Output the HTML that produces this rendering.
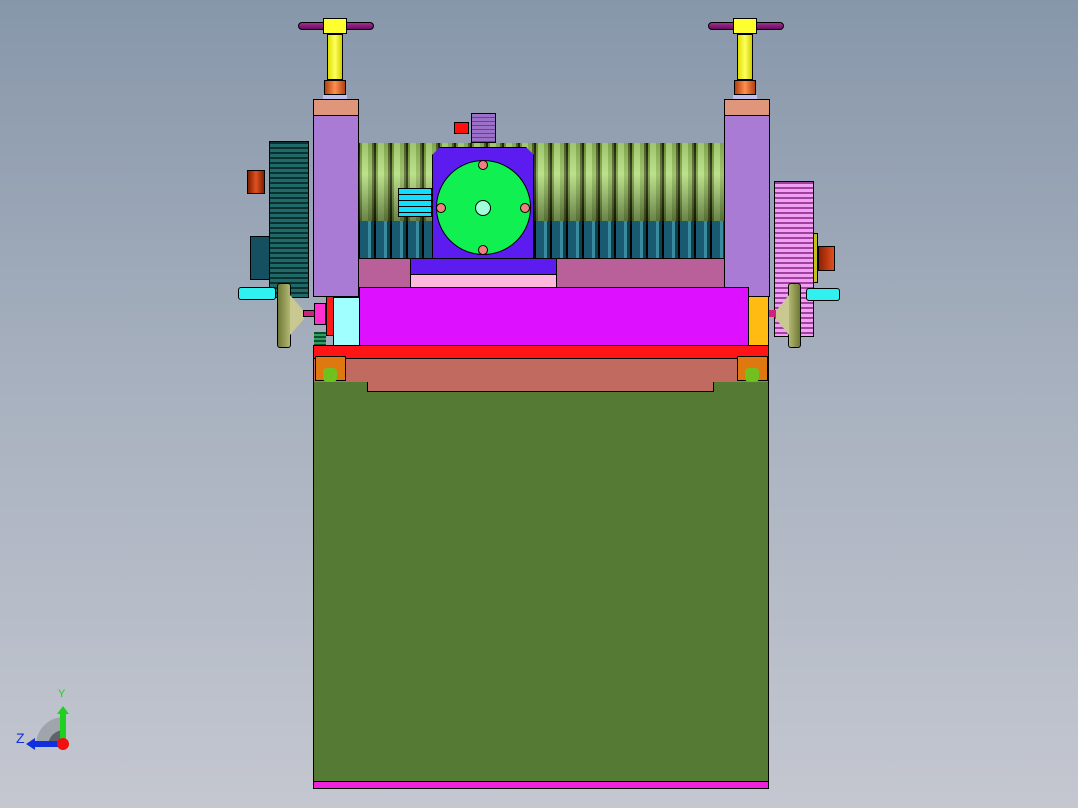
<!DOCTYPE html>
<html><head><meta charset="utf-8"><style>
*{margin:0;padding:0;box-sizing:border-box}
body{width:1078px;height:808px;overflow:hidden;position:relative;background:linear-gradient(#8797aa,#a9b2c0 50%,#c4c7d0);font-family:"Liberation Sans",sans-serif}
.a{position:absolute}
.b{border:1px solid #000}
</style></head><body>
<!-- top handles -->
<div class="a b" style="left:298px;top:22px;width:76px;height:8px;background:linear-gradient(#a03090,#6a0a60);border-radius:4px"></div>
<div class="a b" style="left:323px;top:18px;width:24px;height:16px;background:#ffff30"></div>
<div class="a b" style="left:327px;top:34px;width:16px;height:46px;background:linear-gradient(90deg,#e0e000,#ffff60,#d0d000)"></div>
<div class="a b" style="left:324px;top:80px;width:22px;height:15px;background:linear-gradient(90deg,#b04010,#ff9050,#b04010)"></div>
<div class="a" style="left:323px;top:95px;width:24px;height:4px;background:#c0c0f0"></div>
<div class="a b" style="left:708px;top:22px;width:76px;height:8px;background:linear-gradient(#a03090,#6a0a60);border-radius:4px"></div>
<div class="a b" style="left:733px;top:18px;width:24px;height:16px;background:#ffff30"></div>
<div class="a b" style="left:737px;top:34px;width:16px;height:46px;background:linear-gradient(90deg,#e0e000,#ffff60,#d0d000)"></div>
<div class="a b" style="left:734px;top:80px;width:22px;height:15px;background:linear-gradient(90deg,#b04010,#ff9050,#b04010)"></div>
<div class="a" style="left:733px;top:95px;width:24px;height:4px;background:#c0c0f0"></div>
<!-- rollers -->
<div class="a" style="left:358px;top:143px;width:366px;height:78px;background:repeating-linear-gradient(90deg,#202a08 0 2px,#7a9a40 2px 4px,#b0dc78 4px 10px,#90b858 10px 14px,#506a20 14px 16px);"></div>
<div class="a" style="left:358px;top:143px;width:366px;height:78px;background:linear-gradient(rgba(0,0,0,.1),rgba(255,255,255,.15) 40%,rgba(0,0,0,.4))"></div>
<div class="a" style="left:358px;top:221px;width:366px;height:37px;background:repeating-linear-gradient(90deg,#000 0 2px,#1a5a70 2px 10px,#3a8aa0 10px 13px,#104050 13px 16px)"></div>
<!-- left side parts -->
<div class="a b" style="left:247px;top:170px;width:18px;height:24px;background:linear-gradient(90deg,#802000,#e05020,#802000)"></div>
<div class="a b" style="left:250px;top:236px;width:20px;height:44px;background:#145060"></div>
<div class="a b" style="left:269px;top:141px;width:40px;height:157px;background:repeating-linear-gradient(#0a3030 0 2px,#1f6a68 2px 5px)"></div>
<div class="a b" style="left:238px;top:287px;width:38px;height:13px;background:#30f0f0;border-radius:3px"></div>
<div class="a b" style="left:277px;top:283px;width:14px;height:65px;background:linear-gradient(90deg,#707838,#b0b870);border-radius:3px"></div>
<div class="a" style="left:290px;top:295px;width:14px;height:40px;background:#c8c890;clip-path:polygon(0 0,100% 40%,100% 60%,0 100%)"></div>
<div class="a b" style="left:303px;top:310px;width:12px;height:7px;background:#d02080"></div>
<div class="a b" style="left:314px;top:303px;width:12px;height:22px;background:#ff30d0"></div>
<div class="a" style="left:314px;top:332px;width:12px;height:13px;background:repeating-linear-gradient(#0a5030 0 2px,#30a060 2px 4px)"></div>
<!-- right side parts -->
<div class="a b" style="left:774px;top:181px;width:40px;height:156px;background:repeating-linear-gradient(#a040a0 0 2px,#f0a0f0 2px 5px)"></div>
<div class="a b" style="left:813px;top:233px;width:5px;height:50px;background:#c0c020"></div>
<div class="a b" style="left:818px;top:246px;width:17px;height:25px;background:linear-gradient(90deg,#902000,#e05020)"></div>
<div class="a b" style="left:806px;top:288px;width:34px;height:13px;background:#30f0f0;border-radius:3px"></div>
<div class="a b" style="left:788px;top:283px;width:13px;height:65px;background:linear-gradient(90deg,#b0b870,#707838);border-radius:3px"></div>
<div class="a" style="left:776px;top:295px;width:13px;height:40px;background:#c8c890;clip-path:polygon(100% 0,0 40%,0 60%,100% 100%)"></div>
<div class="a" style="left:768px;top:310px;width:8px;height:7px;background:#d02080"></div>
<!-- pillars -->
<div class="a b" style="left:313px;top:99px;width:46px;height:17px;background:#e0967a"></div>
<div class="a b" style="left:313px;top:115px;width:46px;height:182px;background:#aa7bd4"></div>
<div class="a b" style="left:724px;top:99px;width:46px;height:17px;background:#e0967a"></div>
<div class="a b" style="left:724px;top:115px;width:46px;height:182px;background:#aa7bd4"></div>
<!-- center housing -->
<div class="a b" style="left:358px;top:258px;width:367px;height:30px;background:#b9609a"></div>
<div class="a b" style="left:410px;top:258px;width:147px;height:17px;background:#5c1cf0"></div>
<div class="a b" style="left:410px;top:274px;width:147px;height:14px;background:#ffb8dd"></div>
<div class="a b" style="left:432px;top:147px;width:102px;height:112px;background:#5c1cf0;clip-path:polygon(0 8px,8px 0,calc(100% - 8px) 0,100% 8px,100% 100%,0 100%)"></div>
<div class="a" style="left:436px;top:160px;width:95px;height:95px;border-radius:50%;background:#10f050;border:1px solid #000"></div>
<div class="a b" style="left:475px;top:200px;width:16px;height:16px;border-radius:50%;background:#a0ffd8"></div>
<div class="a b" style="left:478px;top:160px;width:10px;height:10px;border-radius:50%;background:#f08080"></div>
<div class="a b" style="left:478px;top:245px;width:10px;height:10px;border-radius:50%;background:#f08080"></div>
<div class="a b" style="left:436px;top:203px;width:10px;height:10px;border-radius:50%;background:#f08080"></div>
<div class="a b" style="left:520px;top:203px;width:10px;height:10px;border-radius:50%;background:#f08080"></div>
<div class="a b" style="left:398px;top:188px;width:34px;height:29px;background:repeating-linear-gradient(#10e0ff 0 5px,#000 5px 6px)"></div>
<div class="a b" style="left:471px;top:113px;width:25px;height:30px;background:repeating-linear-gradient(#9a70c8 0 3px,#6a4090 3px 4px)"></div>
<div class="a b" style="left:454px;top:122px;width:15px;height:12px;background:#ff1010"></div>
<!-- lower assembly -->
<div class="a b" style="left:326px;top:296px;width:8px;height:40px;background:#ff1a1a"></div>
<div class="a b" style="left:333px;top:297px;width:27px;height:49px;background:#a0ffff"></div>
<div class="a b" style="left:747px;top:296px;width:22px;height:50px;background:#ffbb11"></div>
<div class="a b" style="left:359px;top:287px;width:390px;height:59px;background:#dd11ff"></div>
<div class="a b" style="left:313px;top:345px;width:456px;height:14px;background:#ff1515"></div>
<div class="a b" style="left:313px;top:358px;width:456px;height:35px;background:#c06a60"></div>
<div class="a b" style="left:313px;top:382px;width:456px;height:400px;background:#547a34;border-top:none"></div>
<div class="a" style="left:367px;top:382px;width:347px;height:10px;background:#c06a60;border:1px solid #000;border-top:none"></div>
<div class="a b" style="left:315px;top:356px;width:31px;height:25px;background:#e07810"></div>
<div class="a" style="left:323px;top:368px;width:14px;height:14px;background:#70c020;border-radius:4px"></div>
<div class="a b" style="left:737px;top:356px;width:31px;height:25px;background:#e07810"></div>
<div class="a" style="left:745px;top:368px;width:14px;height:14px;background:#70c020;border-radius:4px"></div>
<div class="a b" style="left:313px;top:781px;width:456px;height:8px;background:#ee22dd"></div>
<!-- triad -->
<div class="a" style="left:36px;top:717px;width:28px;height:28px;border-radius:28px 0 0 0;background:#a0a4ac"></div>
<div class="a" style="left:48px;top:730px;width:16px;height:16px;border-radius:16px 0 0 0;background:#606468"></div>
<div class="a" style="left:60px;top:712px;width:6px;height:32px;background:#20d020"></div>
<div class="a" style="left:57px;top:706px;width:0;height:0;border-left:6px solid transparent;border-right:6px solid transparent;border-bottom:8px solid #20d020"></div>
<div class="a" style="left:34px;top:741px;width:28px;height:6px;background:#1030e0"></div>
<div class="a" style="left:26px;top:738px;width:0;height:0;border-top:6px solid transparent;border-bottom:6px solid transparent;border-right:9px solid #1030e0"></div>
<div class="a" style="left:57px;top:738px;width:12px;height:12px;border-radius:50%;background:#f01010"></div>
<div class="a" style="left:58px;top:688px;font-size:11px;color:#20d020">Y</div>
<div class="a" style="left:16px;top:730px;font-size:14px;color:#1030e0">Z</div>
</body></html>
